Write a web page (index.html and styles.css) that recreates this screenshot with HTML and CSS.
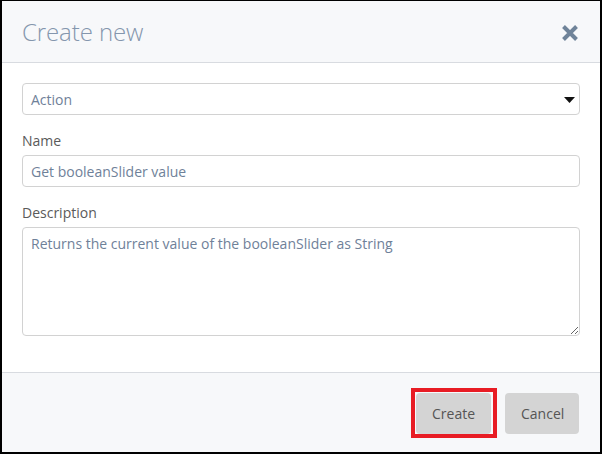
FILE: index.html
```html
<!DOCTYPE html>
<html>
<head>
<meta charset="utf-8">
<link rel="stylesheet" href="styles.css">
</head>
<body>
<div class="dialog">
  <div class="header">
    <h1 class="title">Create new</h1>
    <button class="close" aria-label="Close">
      <svg width="18" height="18" viewBox="0 0 18 18"><path d="M2.5 2.5 L15.5 15.5 M15.5 2.5 L2.5 15.5" stroke="#6f8399" stroke-width="4" stroke-linecap="butt"/></svg>
    </button>
  </div>
  <div class="body">
    <div class="select">
      <span>Action</span>
      <svg class="caret" width="11" height="6" viewBox="0 0 11 6"><path d="M0 0 H11 L5.5 6 Z" fill="#111"/></svg>
    </div>
    <label class="label">Name</label>
    <input class="input" type="text" value="Get booleanSlider value">
    <label class="label">Description</label>
    <textarea class="textarea">Returns the current value of the booleanSlider as String</textarea>
  </div>
  <div class="footer">
    <div class="btn-wrap">
      <button class="btn">Create</button>
      <span class="highlight"></span>
    </div>
    <button class="btn">Cancel</button>
  </div>
</div>
</body>
</html>
```
FILE: styles.css
```css
* { box-sizing: border-box; }
html, body { margin: 0; padding: 0; }
body {
  width: 602px;
  height: 454px;
  font-family: "Open Sans", "DejaVu Sans", sans-serif;
  background: #fff;
}
.dialog {
  width: 602px;
  height: 454px;
  border-style: solid;
  border-color: #000;
  border-width: 1px 2px 2px 2px;
  display: flex;
  flex-direction: column;
  background: #fff;
}
.header {
  height: 62px;
  background: #f7f8fa;
  border-bottom: 1px solid #d8dbe0;
  display: flex;
  align-items: center;
  justify-content: space-between;
  padding: 0 21px 0 20px;
}
.title {
  margin: 0;
  font-size: 24px;
  font-weight: 300;
  color: #8496ad;
  letter-spacing: -0.1px;
}
.close {
  border: 0;
  background: transparent;
  padding: 0;
  width: 18px;
  height: 18px;
  margin-top: 2px;
  display: flex;
}
.body {
  padding: 20px 20px 36px 20px;
  display: flex;
  flex-direction: column;
}
.select, .input, .textarea {
  width: 100%;
  border: 1px solid #d2d2d2;
  border-radius: 4px;
  background: #fff;
  font-family: "Open Sans", "DejaVu Sans", sans-serif;
  font-size: 14px;
  color: #6f8199;
}
.select {
  height: 32px;
  display: flex;
  align-items: center;
  justify-content: space-between;
  padding: 0 4px 0 8px;
}
.caret { margin-right: 0; margin-top: 1px; }
.label {
  font-size: 14px;
  color: #5a5a5a;
  line-height: 20px;
  margin-top: 16px;
  margin-bottom: 4px;
}
.input {
  height: 32px;
  padding: 0 8px;
  outline: none;
}
.textarea {
  height: 109px;
  padding: 6px 8px;
  resize: vertical;
  outline: none;
  line-height: 20px;
}
.footer {
  flex: 1;
  background: #f7f8fa;
  border-top: 1px solid #d8dbe0;
  display: flex;
  justify-content: flex-end;
  align-items: flex-start;
  gap: 14px;
  padding: 20px 21px 0 0;
}
.btn-wrap { position: relative; display: flex; }
.btn {
  height: 41px;
  padding: 0 16px;
  border: 0;
  border-radius: 4px;
  background: #d4d4d4;
  color: #555;
  font-family: "Open Sans", "DejaVu Sans", sans-serif;
  font-size: 14px;
}
.btn-wrap .btn { width: 75px; }
.footer > .btn { width: 74px; }
.highlight {
  position: absolute;
  left: -5px;
  top: -5px;
  right: -6px;
  bottom: -4px;
  border: 4px solid #e81c24;
  pointer-events: none;
}
```
